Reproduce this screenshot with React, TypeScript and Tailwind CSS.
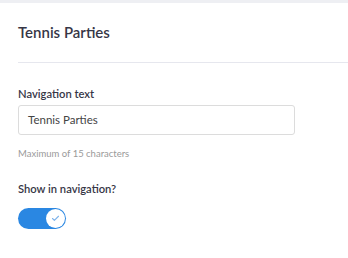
import { Check } from 'lucide-react';

export default function App() {
  return (
    <div className="min-h-screen bg-white font-['Lato',sans-serif] text-[#3b3b4b]">
      <div className="h-[3px] bg-[#eeeff3]" />
      <div className="pl-[18px]">
        <div className="border-b border-[#e6e7ee] pt-[18px] pb-[19px]">
          <h1 className="text-[15px] font-semibold leading-[22px] text-[#363646]">Tennis Parties</h1>
        </div>
        <div className="pt-[23px]">
          <label className="block text-[11.2px] font-semibold leading-[16px] text-[#363646]">Navigation text</label>
          <div className="mt-[3px] flex h-[30px] w-[277px] items-center rounded-[3px] border border-[#dcdcdc] px-[9px] text-[11.5px] text-[#444]">
            Tennis Parties
          </div>
          <p className="mt-[12px] text-[9.5px] leading-[14px] text-[#9a9a9a]">Maximum of 15 characters</p>
          <label className="mt-[20px] block text-[11.2px] font-semibold leading-[16px] text-[#363646]">Show in navigation?</label>
          <div className="mt-[11px] flex h-[21px] w-[48px] items-center justify-end rounded-full bg-[#2a87e2] pr-[1px]">
            <span className="flex h-[19px] w-[19px] items-center justify-center rounded-full bg-white">
              <Check className="h-[9px] w-[9px] text-[#7fb3ea]" strokeWidth={3} />
            </span>
          </div>
        </div>
      </div>
    </div>
  );
}
